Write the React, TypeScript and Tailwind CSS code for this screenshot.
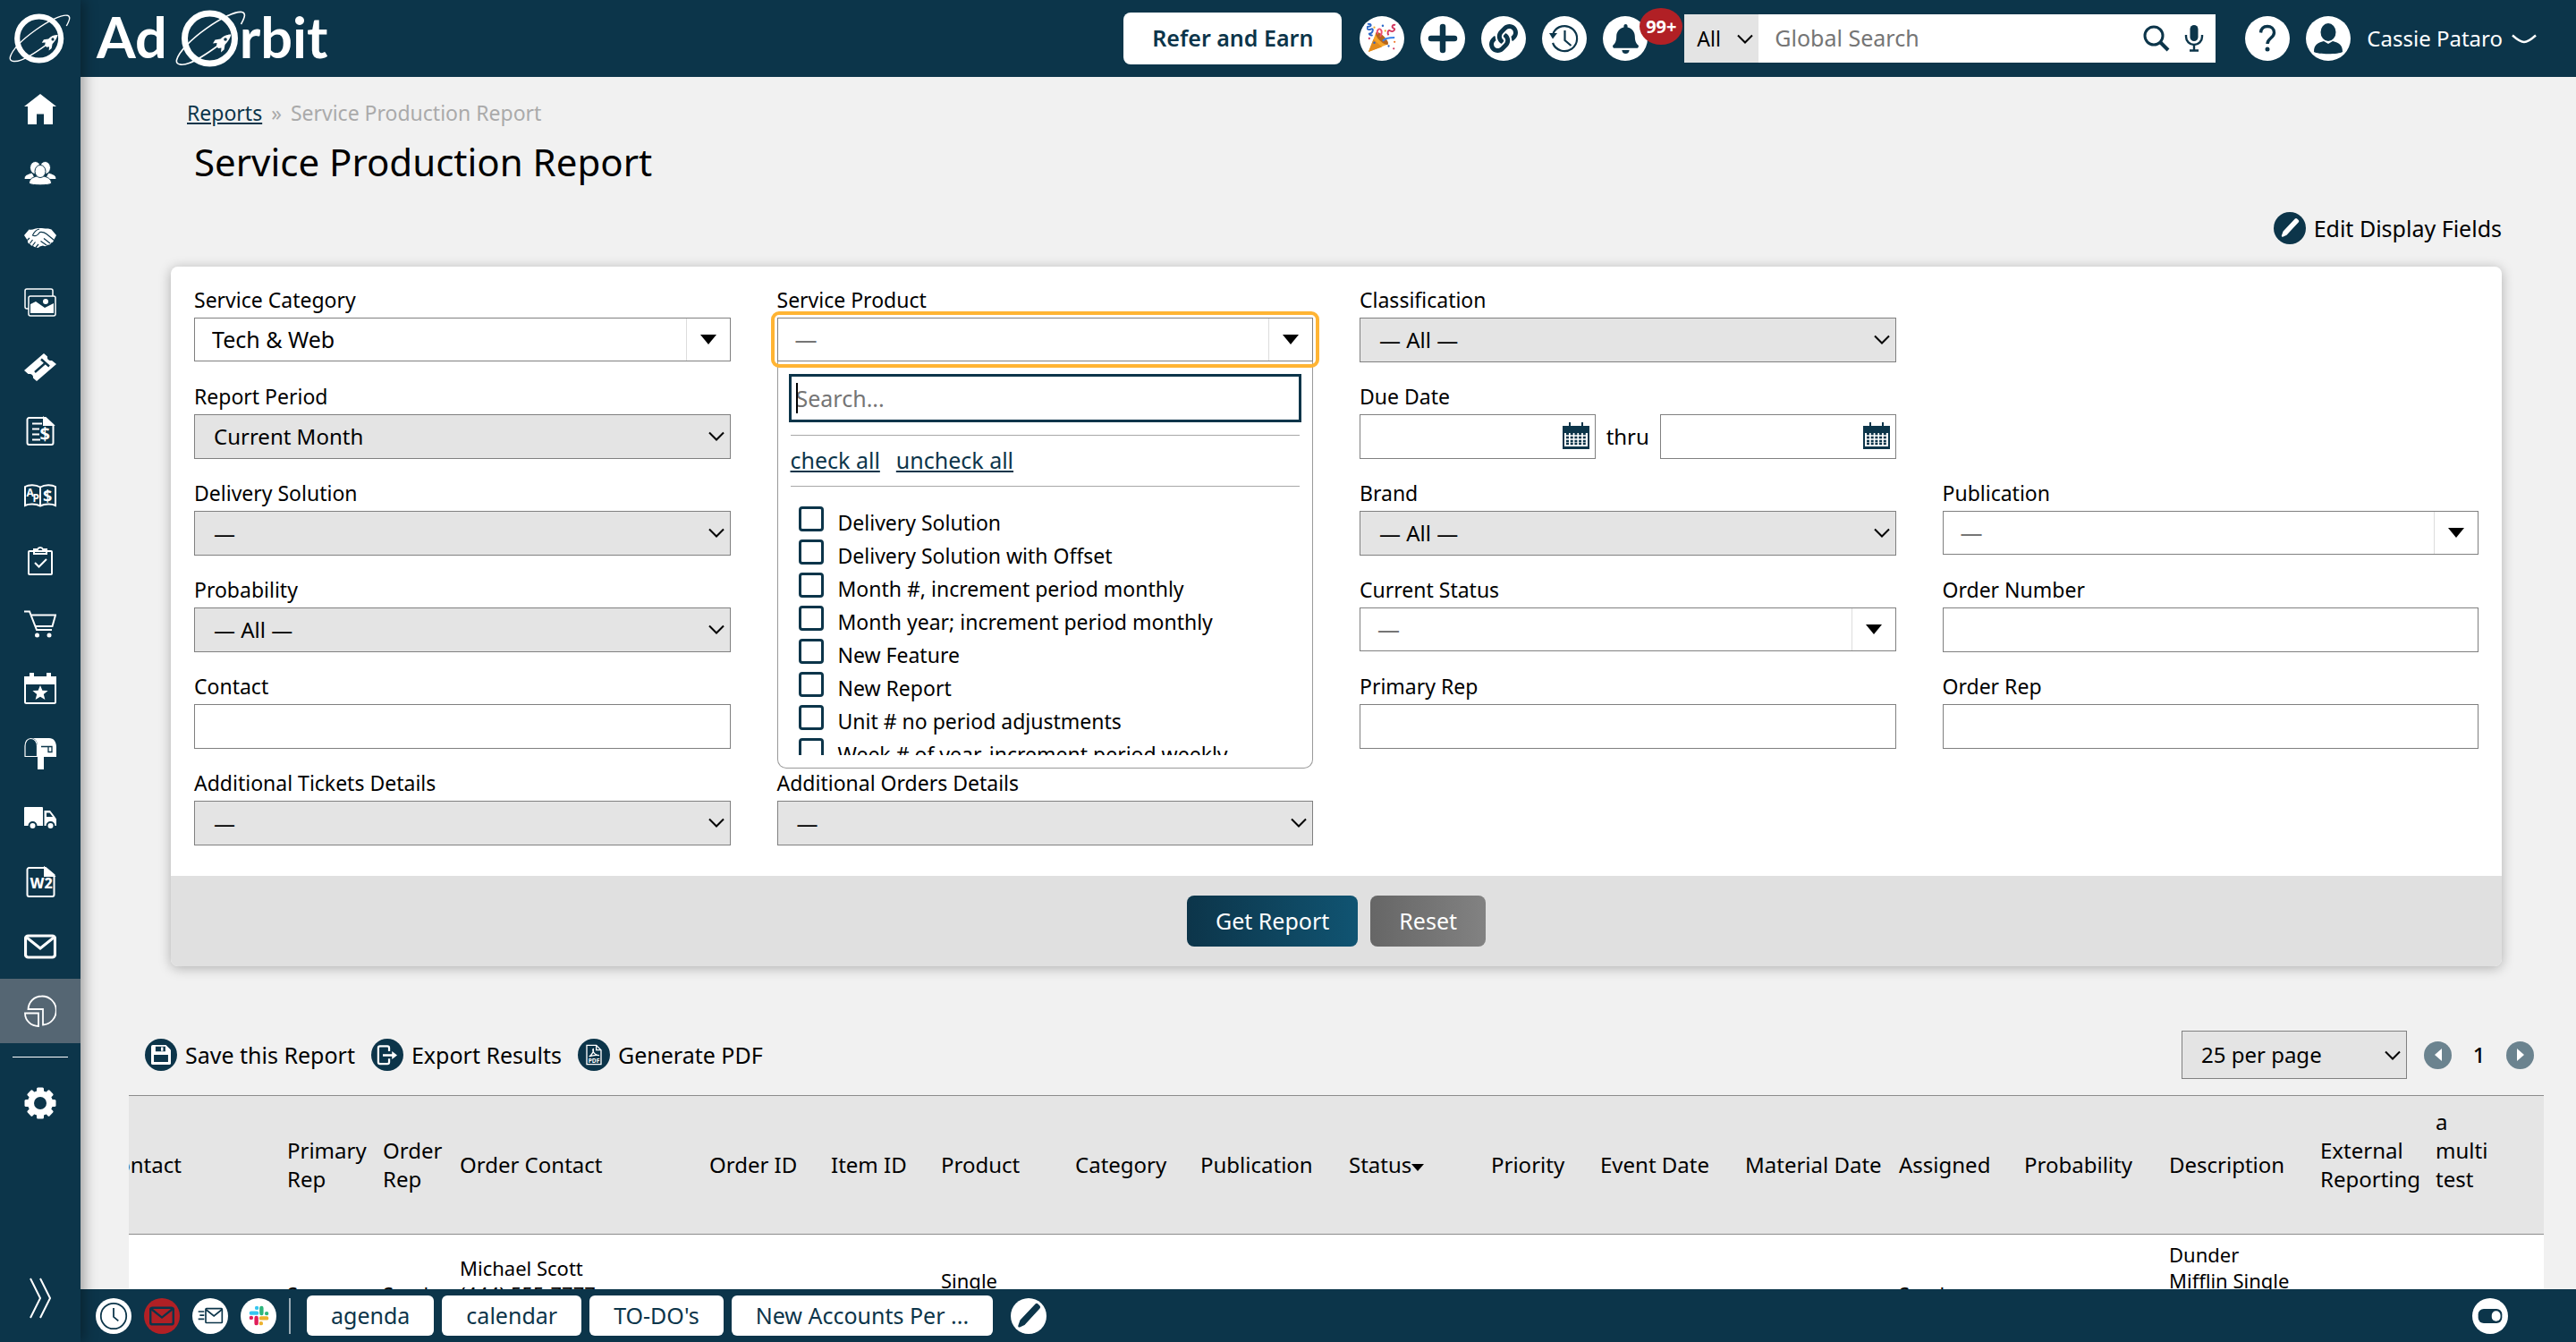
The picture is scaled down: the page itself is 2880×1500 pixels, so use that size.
import React from 'react';
import { FaBell, FaLink } from 'react-icons/fa';

const columns = [
    { label: 'Contact', width: 205 },
    { label: 'Primary Rep', width: 107 },
    { label: 'Order Rep', width: 86 },
    { label: 'Order Contact', width: 279 },
    { label: 'Order ID', width: 136 },
    { label: 'Item ID', width: 123 },
    { label: 'Product', width: 150 },
    { label: 'Category', width: 140 },
    { label: 'Publication', width: 166 },
    { label: 'Status', width: 159, sorted: true },
    { label: 'Priority', width: 122 },
    { label: 'Event Date', width: 162 },
    { label: 'Material Date', width: 172 },
    { label: 'Assigned', width: 140 },
    { label: 'Probability', width: 162 },
    { label: 'Description', width: 169 },
    { label: 'External Reporting', width: 129 },
    { label: 'a multi test', width: 131 },
];

const rows: Record<string, string[]>[] = [
    {
        'Primary Rep': ['Sam', 'Jones'],
        'Order Rep': ['Sarah', 'Jones'],
        'Order Contact': ['Michael Scott', '(444) 555-7777', 'Dunder Mifflin', 'Scranton'],
        Product: ['Single', 'Blog', 'Post'],
        Assigned: ['Sarah', 'Jones'],
        Description: ['Dunder', 'Mifflin Single', 'Blog', 'Post', 'Monthly'],
    },
];

const products = [
    'Delivery Solution',
    'Delivery Solution with Offset',
    'Month #, increment period monthly',
    'Month year; increment period monthly',
    'New Feature',
    'New Report',
    'Unit # no period adjustments',
    'Week # of year, increment period weekly',
];

/* ---------- icons ---------- */

const Svg = ({ children, className = 'size-9', box = '0 0 36 36' }: { children: React.ReactNode; className?: string; box?: string }) => (
    <svg viewBox={box} className={className} fill="none" stroke="currentColor" strokeWidth={2} aria-hidden="true">
        {children}
    </svg>
);

const Chevron = ({ className = 'w-[18px] h-[11px]' }: { className?: string }) => (
    <Svg box="0 0 18 11" className={className}>
        <path d="M1 1.5 9 9.5 17 1.5" />
    </Svg>
);

const PencilIcon = ({ className }: { className?: string }) => (
    <Svg className={className}>
        <path d="M8 30.5c-1.300.3-2-.5-1.700-1.800L8.500 22.500 25.500 4.500a2.200 2.200 0 0 1 3 0l2 2a2.200 2.200 0 0 1 0 3L13.500 28z" fill="currentColor" stroke="none" />
    </Svg>
);

const EnvelopeIcon = ({ className }: { className?: string }) => (
    <Svg className={className}>
        <rect x="1.500" y="6" width="33" height="24" rx="3" strokeWidth="3.200" />
        <path d="M3 8l15 12L33 8" strokeWidth="3" />
    </Svg>
);

const OrbitMark = ({ className }: { className?: string }) => (
    <Svg box="0 0 80 64" className={className}>
        <circle cx="38.500" cy="32" r="28" strokeWidth="7" />
        <path d="M73.500 16C78 8 79 3.500 74.500 2.500 60 0 7 36 1.500 56c-1.500 7 9 5.500 14 3.500 10-3.500 22-12 33-20" strokeWidth="1.600" />
        <path d="M62.500 27.500c-5 0-9 1.500-12 5l-6 1-2.500 4 4.500-.5-.5 3.500 2 2.500 3.500-.5-.5 5 3.500-3 1-5.500c3-3 5.500-6.500 7-11.500z" fill="currentColor" stroke="none" />
        <circle cx="56" cy="33" r="1.800" fill="#0c354a" stroke="none" />
    </Svg>
);

const UsersIcon = () => (
    <Svg>
        <g fill="currentColor" stroke="#0c354a" strokeWidth="1">
            <path d="M0 24.500c0-5 4-6 9-7.500l4 7.500zM36 24.500c0-5-4-6-9-7.500l-4 7.500z" />
            <ellipse cx="12.500" cy="11.500" rx="6" ry="7" />
            <ellipse cx="23.500" cy="11.500" rx="6" ry="7" />
            <path d="M5.500 29c0-5.500 5-7 8.500-8h8c3.500 1 8.500 2.500 8.500 8-3 2.500-22 2.500-25 0z" />
            <ellipse cx="18" cy="15.500" rx="6" ry="7" />
        </g>
    </Svg>
);

const HandshakeIcon = () => (
    <Svg>
        <path d="M0 15 5.500 8.500c4 1 7-1.500 11-1.500 3.500-.5 7 1 10.500.5l3.500 1L36 15l-3 5.500c0 2-2 3-3 3-.5 2-2.500 2.500-4 2-1 2-3 2-5 1l-3.500 1c-1 1.500-3 2-4 .5-1.500.500-3 0-3.500-1.500-2 .5-3-.500-3.500-2-2 0-3-2-2.500-3.500z" fill="currentColor" stroke="none" />
        <g stroke="#0c354a" strokeWidth="1.200">
            <path d="M17 8c-4 1-6 3.500-7.500 7 3.500 2 6-.5 8-3.500 3-.5 5.500.5 7.500 2l8.500 7" />
            <path d="M22 18.500l7 5.500M18.500 21.500l6.500 4.500M3.500 20.500l2.500-2.500M6.500 24l3-4M9.500 26.500l3-4M13 28.500l3-3.500" />
        </g>
    </Svg>
);

const GalleryIcon = () => (
    <Svg>
        <rect x="1" y="3" width="31" height="22" rx="2" strokeWidth="1.500" />
        <rect x="5" y="11" width="30" height="22" rx="2" fill="#0c354a" strokeWidth="1.500" />
        <path d="M7 30V20l6-3 10 7 10-5v11z" fill="currentColor" stroke="none" />
        <circle cx="24" cy="17" r="3" fill="currentColor" stroke="none" />
    </Svg>
);

const TicketIcon = () => (
    <Svg>
        <path d="M0 22 22 3l4 3.500c-.5 3 1.500 5 5 4.500l5 4L14 34l-4-3.500c.5-3-1.500-5-5.500-4.500z" fill="currentColor" stroke="none" />
        <path d="M12 24l12-10.500M19 9.500l9 8" stroke="#0c354a" strokeWidth="2.400" />
    </Svg>
);

const InvoiceIcon = () => (
    <Svg>
        <path d="M24 3H5.500A2 2 0 0 0 3.500 5v26a2 2 0 0 0 2 2h25a2 2 0 0 0 2-2V11z" />
        <path d="M22 3v8h10z" fill="currentColor" />
        <path d="M9 9.500h11M9 15.500h8M9 21.500h8M9 27.500h9" />
        <text x="17.500" y="28" fill="currentColor" stroke="none" className="text-[20px] font-bold">$</text>
    </Svg>
);

const LedgerIcon = () => (
    <Svg>
        <path d="M18 8.500C13 5.500 5 5.500 1 8v21c4-2 12-2 17 .500 5-2.500 13-2.500 17-.500V8c-4-2.500-12-2.500-17 .500zM18 8v21" />
        <text x="2.500" y="19" fill="currentColor" stroke="none" className="text-[12px] font-bold">A</text>
        <text x="9.500" y="25" fill="currentColor" stroke="none" className="text-[12px] font-bold">P</text>
        <text x="21" y="24.500" fill="currentColor" stroke="none" className="text-[18px] font-bold">$</text>
    </Svg>
);

const ClipboardIcon = () => (
    <Svg>
        <rect x="5" y="8" width="26" height="26" rx="1" />
        <path d="M11 11V6h4a3.200 3.200 0 0 1 6 0h4v5z" />
        <path d="M12 21l4.500 4.500L25 17" />
    </Svg>
);

const CartIcon = () => (
    <Svg>
        <path d="M0 3.500h6l8 20.500h17M8 7.500h27L31.500 20H13" />
        <circle cx="14.500" cy="30" r="2.500" fill="currentColor" stroke="none" />
        <circle cx="28" cy="30" r="2.500" fill="currentColor" stroke="none" />
    </Svg>
);

const EventIcon = () => (
    <Svg>
        <rect x="1" y="5" width="34" height="29" rx="1.500" />
        <path d="M1 5h34v7H1zM7 1h3v5H7zM26 1h3v5h-3z" fill="currentColor" />
        <path d="M18 14l2.400 5.700 6.200.4-4.800 3.900 1.600 6-5.400-3.300-5.400 3.300 1.600-6-4.800-3.900 6.200-.4z" fill="currentColor" stroke="none" />
    </Svg>
);

const MailboxIcon = () => (
    <Svg>
        <path d="M8 1h20c5 0 8 4 8 10v11H22v14h-7V22h0V10C15 4 12 1 8 1z" fill="currentColor" stroke="none" />
        <path d="M1 21.500V10C1 5 3.500 1.500 7.500 1.500S14.500 5 14.500 10v11.500z" fill="#0c354a" strokeWidth="1.200" />
        <path d="M19 10.500h12v6h-4v-6" stroke="#0c354a" strokeWidth="1.300" />
    </Svg>
);

const TruckIcon = () => (
    <Svg>
        <path d="M1 6h19a1 1 0 0 1 1 1v20H0V7a1 1 0 0 1 1-1zM22.500 10H29l5 6.500 2 3V27H22.500z" fill="currentColor" stroke="none" />
        <path d="M25 12.500h3.500l3.500 4.500h-7z" fill="#0c354a" stroke="none" />
        <circle cx="9.500" cy="27" r="4" fill="currentColor" stroke="#0c354a" />
        <circle cx="29.500" cy="27" r="4" fill="currentColor" stroke="#0c354a" />
    </Svg>
);

const W2Icon = () => (
    <Svg>
        <path d="M24 2H5.500a2 2 0 0 0-2 2v28a2 2 0 0 0 2 2h26a2 2 0 0 0 2-2V10z" />
        <path d="M23 2v9h10z" fill="currentColor" />
        <text x="6.500" y="25" fill="currentColor" stroke="none" className="text-[16px] font-extrabold">W2</text>
    </Svg>
);

const ReportIcon = () => (
    <Svg>
        <path d="M4.500 16C5 8 11 1.500 19.500 1.500A15.500 16 0 0 1 21 33.500V16z" strokeWidth="1.800" />
        <path d="M1 20.500h15V35C8 35 1 29 1 20.500z" strokeWidth="1.800" />
    </Svg>
);

const GearIcon = () => (
    <Svg>
        {[0, 45, 90, 135].map((angle) => (
            <rect key={angle} x="14" y="0.500" width="8" height="35" rx="1.500" fill="currentColor" stroke="none" transform={`rotate(${angle} 18 18)`} />
        ))}
        <circle cx="18" cy="18" r="10.500" strokeWidth="7" />
        <circle cx="18" cy="18" r="7" fill="#0c354a" stroke="none" />
    </Svg>
);

const PartyIcon = () => (
    <Svg className="size-[34px]">
        <path d="M11 11 2 34l23-9z" fill="#f5a52a" stroke="none" />
        <path d="M8 19 2 34l16-6z" fill="#e38b1d" stroke="none" />
        <ellipse cx="18" cy="18" rx="3.500" ry="10" transform="rotate(-45 18 18)" fill="#b5651d" stroke="none" />
        <path d="M1 1c5-1 5 3 1 3s-1 5 3 3 2 5-1 5 1 3 3 2" stroke="#2a66c8" />
        <path d="M34 2c-4-1-5 3-2 4s-1 5-4 3-4 3-2 5" stroke="#d2375f" />
        <path d="M13 13c-2-5 2-8 4-5s0 5-1 8" stroke="#ef4f6e" />
        <path d="M19 21c3-4 9-4 14-4" stroke="#3a82e8" />
        <g stroke="none">
            <circle cx="19" cy="3" r="1.300" fill="#2a66c8" />
            <circle cx="9" cy="5" r="1.200" fill="#f0b02c" />
            <circle cx="22" cy="9" r="1.200" fill="#f0b02c" />
            <circle cx="3" cy="18" r="1.200" fill="#d2375f" />
            <circle cx="26" cy="27" r="1.200" fill="#2a66c8" />
            <circle cx="33" cy="22" r="1.200" fill="#f07a2c" />
            <circle cx="32" cy="30" r="1.200" fill="#d2375f" />
            <circle cx="9" cy="23" r="1.300" fill="#2a66c8" />
        </g>
    </Svg>
);

const HistoryIcon = () => (
    <Svg className="size-9">
        <path d="M5.500 12A14 14 0 1 1 5 23" strokeWidth="2.200" />
        <path d="M1 12h9l-5 6.500z" fill="currentColor" stroke="none" />
        <path d="M18.500 9v11l7 6" strokeWidth="2.200" />
    </Svg>
);

const CalendarIcon = () => (
    <Svg box="0 0 30 30" className="size-[30px]">
        <path d="M1 5h28v6H1z" fill="currentColor" />
        <path d="M1 5h28v24H1zM8 0v5M22 0v5M1 28h28" />
        {[13, 17, 21, 24].map((y) => (
            <path key={y} d={`M4 ${y}h22`} strokeDasharray="3 1.700" strokeWidth="2.600" />
        ))}
    </Svg>
);

const navItems = [
    { label: 'Home', icon: <Svg><path d="M18 1 0 15h4v20h10V23.500h8V35h10V15h4z" fill="currentColor" stroke="none" /></Svg> },
    { label: 'Contacts', icon: <UsersIcon /> },
    { label: 'Deals', icon: <HandshakeIcon /> },
    { label: 'Media', icon: <GalleryIcon /> },
    { label: 'Tickets', icon: <TicketIcon /> },
    { label: 'Invoices', icon: <InvoiceIcon /> },
    { label: 'Payables', icon: <LedgerIcon /> },
    { label: 'Tasks', icon: <ClipboardIcon /> },
    { label: 'Orders', icon: <CartIcon /> },
    { label: 'Events', icon: <EventIcon /> },
    { label: 'Mailbox', icon: <MailboxIcon /> },
    { label: 'Delivery', icon: <TruckIcon /> },
    { label: 'Documents', icon: <W2Icon /> },
    { label: 'Email', icon: <EnvelopeIcon className="size-9" /> },
    { label: 'Reports', icon: <ReportIcon />, active: true },
];

/* ---------- form pieces ---------- */

interface FieldProps {
    id: string;
    label: string;
    className?: string;
    children: React.ReactNode;
}

const Field = ({ id, label, className = '', children }: FieldProps) => (
    <div className={`min-w-0 ${className}`}>
        <label htmlFor={id} className="block mb-1 text-[23px] leading-8">{label}</label>
        {children}
    </div>
);

const SelectField = ({ id, label, value, className }: { id: string; label: string; value: string; className?: string }) => (
    <Field id={id} label={label} className={className}>
        <div className="relative">
            <select id={id} className="block w-full h-[50px] px-[21px] appearance-none bg-[#e4e4e4] border border-[#808080] text-2xl">
                <option>{value}</option>
            </select>
            <Chevron className="absolute right-[7px] top-[19px] w-[18px] h-[11px] pointer-events-none" />
        </div>
    </Field>
);

const TextField = ({ id, label, className }: { id: string; label: string; className?: string }) => (
    <Field id={id} label={label} className={className}>
        <input id={id} type="text" className="block w-full h-[50px] px-5 bg-white border border-[#808080] text-2xl" />
    </Field>
);

interface ComboProps {
    id: string;
    label: string;
    value?: string;
    className?: string;
    children?: React.ReactNode;
}

const ComboField = ({ id, label, value, className, children }: ComboProps) => (
    <Field id={id} label={label} className={className}>
        <div className="relative">
            <div className="flex h-[49px] bg-white border border-[#808080]">
                <input id={id} type="text" defaultValue={value} placeholder="—" className="flex-1 min-w-0 px-[19px] text-[25px] outline-none placeholder:text-[#757575]" />
                <button type="button" aria-label={`Open ${label}`} className="w-[49px] flex items-center justify-center border-l border-[#ddd]">
                    <svg viewBox="0 0 18 11" className="w-[18px] h-[11px]" fill="currentColor"><path d="M0 0h18L9 11z" /></svg>
                </button>
            </div>
            {children}
        </div>
    </Field>
);

const DateInput = ({ id, label }: { id: string; label: string }) => (
    <div className="relative flex-1 min-w-0">
        <input id={id} type="text" aria-label={label} className="block w-full h-[50px] pl-5 pr-11 bg-white border border-[#808080] text-2xl" />
        <button type="button" aria-label={`Pick ${label}`} className="absolute right-[7px] top-[9px] text-[#0c354a]">
            <CalendarIcon />
        </button>
    </div>
);

const ProductMenu = () => (
    <>
        <div className="absolute z-10 left-0 right-0 top-[49px] px-3 pt-[14px] pb-[14px] bg-white border border-t-0 border-[#999] rounded-b-[10px]">
            <div className="relative">
                <input type="text" aria-label="Search products" placeholder="Search..." className="block w-full h-[54px] px-[5px] border-3 border-[#0c354a] text-[25px] outline-none placeholder:text-[#757575]" />
                <span className="absolute left-2 top-[10px] w-[2px] h-[34px] bg-black" />
            </div>
            <div className="mx-[2px] mt-[14px] mb-4 h-[58px] flex items-center gap-[18px] border-y border-[#a8a8a8] text-[25px] text-[#0c354a]">
                <a href="#check" className="underline">check all</a>
                <a href="#uncheck" className="underline">uncheck all</a>
            </div>
            <ul className="h-[284px] pt-[6px] pl-[11px] overflow-hidden">
                {products.map((product) => (
                    <li key={product}>
                        <label className="flex items-start gap-4 text-[23px] leading-[37px] whitespace-nowrap">
                            <input type="checkbox" className="size-7 shrink-0 appearance-none bg-white border-3 border-[#0c354a] rounded-[4px]" />
                            {product}
                        </label>
                    </li>
                ))}
            </ul>
        </div>
        <div className="absolute z-20 -inset-[7px] border-4 border-[#ffb433] rounded-[9px] pointer-events-none" />
    </>
);

/* ---------- page frame ---------- */

const Sidebar = () => (
    <aside className="relative z-30 w-[90px] shrink-0 flex flex-col bg-[#0c354a] text-white shadow-[4px_0_14px_rgba(0,0,0,0.35)]">
        <a href="#home" aria-label="Ad Orbit" className="h-[86px] flex items-center justify-center">
            <OrbitMark className="w-[70px] h-[56px]" />
        </a>
        <nav>
            {navItems.map((item) => (
                <a
                    key={item.label}
                    href={`#${item.label.toLowerCase()}`}
                    aria-label={item.label}
                    className={`h-[72px] flex items-center justify-center ${item.active ? 'bg-[#556673]' : ''}`}
                >
                    {item.icon}
                </a>
            ))}
            <hr className="mx-[14px] my-[15px] border-white" />
            <a href="#settings" aria-label="Settings" className="h-[72px] flex items-center justify-center">
                <GearIcon />
            </a>
        </nav>
        <button type="button" aria-label="Expand menu" className="mt-auto mb-[26px] self-center">
            <Svg box="0 0 24 46" className="w-6 h-[46px]">
                <path d="M1 1l11 22L1 45M12 1l11 22-11 22" />
            </Svg>
        </button>
    </aside>
);

const circle = 'size-[50px] rounded-full bg-white text-[#0c354a] flex items-center justify-center shrink-0';

const Header = () => (
    <header className="h-[86px] shrink-0 flex items-center pl-[18px] pr-11 bg-[#0c354a] text-white">
        <div className="flex items-center font-['Lato',sans-serif] font-bold text-[63px] leading-[64px]">
            <span className="pb-1">Ad</span>
            <OrbitMark className="ml-[9px] -mr-2 w-20 h-16" />
            <span className="pb-1">rbit</span>
        </div>

        <button type="button" className="ml-auto h-[58px] px-8 rounded-lg bg-white text-[#0c354a] text-[25px] font-semibold">Refer and Earn</button>
        <div className="ml-5 flex gap-[18px]">
            <button type="button" aria-label="What's new" className={circle}><PartyIcon /></button>
            <button type="button" aria-label="Add" className={circle}>
                <Svg className="size-9"><path d="M18 5v26M5 18h26" strokeWidth="6.500" strokeLinecap="round" /></Svg>
            </button>
            <button type="button" aria-label="Links" className={circle}><FaLink size={32} /></button>
            <button type="button" aria-label="History" className={circle}><HistoryIcon /></button>
            <button type="button" aria-label="Notifications" className={`relative ${circle}`}>
                <FaBell size={33} />
                <span className="absolute left-[41px] -top-[9px] w-12 h-[41px] rounded-[50%] bg-[#b12025] text-white text-[20px] leading-[41px] font-bold">99+</span>
            </button>
        </div>

        <div className="ml-[41px] flex h-[54px] w-[594px] bg-white text-black">
            <div className="relative">
                <select aria-label="Search in" className="w-[83px] h-full pl-[14px] appearance-none bg-[#e4e4e4] text-[23px]">
                    <option>All</option>
                </select>
                <Chevron className="absolute right-[6px] top-[22px] w-[18px] h-[11px] pointer-events-none" />
            </div>
            <input type="search" aria-label="Global Search" placeholder="Global Search" className="flex-1 min-w-0 pl-[18px] text-[25px] outline-none placeholder:text-[#757575]" />
            <button type="button" aria-label="Search" className="text-[#0c354a]">
                <Svg box="0 0 30 30" className="size-[30px]"><circle cx="12" cy="12" r="10" strokeWidth="3" /><path d="M19 19l9 9" strokeWidth="4" /></Svg>
            </button>
            <button type="button" aria-label="Voice search" className="ml-4 mr-[13px] text-[#0c354a]">
                <Svg box="0 0 22 30" className="w-[22px] h-[30px]">
                    <rect x="6.500" y="0" width="9" height="18" rx="4.500" fill="currentColor" stroke="none" />
                    <path d="M2 11v2a9 9 0 0 0 18 0v-2M11 22v6M6 28.500h10" strokeWidth="2.400" />
                </Svg>
            </button>
        </div>

        <button type="button" aria-label="Help" className={`ml-[33px] ${circle}`}>
            <Svg className="size-9">
                <path d="M10.500 11.500C11 7 14 4.500 18 4.500s7.500 2.500 7.500 7c0 6-7.500 6-7.500 12.500" strokeWidth="3.400" />
                <circle cx="18" cy="30" r="2.500" fill="currentColor" stroke="none" />
            </Svg>
        </button>
        <button type="button" className="ml-[18px] flex items-center text-2xl">
            <span className={circle}>
                <Svg className="size-9">
                    <ellipse cx="18" cy="11" rx="8.500" ry="10" fill="currentColor" stroke="none" />
                    <path d="M2 33c0-8 4-10 11-12l5 3 5-3c7 2 11 4 11 12-4 3-28 3-32 0z" fill="currentColor" stroke="none" />
                </Svg>
            </span>
            <span className="ml-[18px]">Cassie Pataro</span>
            <Svg box="0 0 28 11" className="ml-[10px] w-7 h-[11px]"><path d="M1 1.500C6 6 10 9 14 9s8-3 13-7.500" strokeWidth="2.400" /></Svg>
        </button>
    </header>
);

const smallCircle = 'size-10 rounded-full flex items-center justify-center shrink-0';

const Footer = () => (
    <footer className="relative h-[59px] shrink-0 flex items-center pl-[17px] pr-[76px] bg-[#0c354a] text-[#0c354a]">
        <div className="flex gap-[14px]">
            <button type="button" aria-label="Recent" className={`${smallCircle} bg-white`}>
                <Svg className="size-8"><circle cx="18" cy="18" r="16" /><path d="M18 8v11l6 5" /></Svg>
            </button>
            <button type="button" aria-label="Failed mail" className={`${smallCircle} bg-[#b12025]`}><EnvelopeIcon className="size-7" /></button>
            <button type="button" aria-label="Send mail" className={`${smallCircle} bg-white`}>
                <Svg className="size-[30px]"><rect x="12" y="8" width="22" height="19" rx="1" /><path d="M12 9l11 9 11-9M2 12h8M4 17h6M2 22h8" /></Svg>
            </button>
            <button type="button" aria-label="Slack" className={`${smallCircle} bg-white`}>
                <Svg box="0 0 24 24" className="size-[23px]">
                    <g strokeWidth="4.600" strokeLinecap="round">
                        <path d="M9.500 3v0M3 9h6.500" stroke="#36c5f0" />
                        <path d="M15 3v6.500M21 9.500v0" stroke="#2eb67d" />
                        <path d="M14.500 21v0M14.500 15H21" stroke="#ecb22e" />
                        <path d="M9 14.500V21M3 14.500v0" stroke="#e01e5a" />
                    </g>
                </Svg>
            </button>
        </div>
        <div className="ml-[14px] w-[2px] h-10 bg-[#9aabb5]" />
        <div className="ml-[18px] flex gap-[9px]">
            {['agenda', 'calendar', "TO-DO's", 'New Accounts Per ...'].map((tab) => (
                <button key={tab} type="button" className="h-[45px] px-[27px] rounded-md bg-white text-[25px] leading-[45px]">{tab}</button>
            ))}
        </div>
        <button type="button" aria-label="Edit tabs" className={`ml-5 ${smallCircle} bg-white`}><PencilIcon className="size-9" /></button>
        <button type="button" aria-label="Toggle bar" className={`ml-auto ${smallCircle} bg-white`}>
            <Svg className="size-8"><rect x="3" y="9" width="30" height="18" rx="7" fill="currentColor" stroke="none" /><rect x="20" y="11.500" width="11" height="13" rx="5.500" fill="#fff" stroke="none" /></Svg>
        </button>
    </footer>
);

const ActionButton = ({ label, children }: { label: string; children: React.ReactNode }) => (
    <button type="button" className="flex items-center gap-[9px] text-[25px] leading-9">
        <span className="size-9 rounded-full bg-[#0c354a] text-white flex items-center justify-center">{children}</span>
        {label}
    </button>
);

const PagerButton = ({ label, path }: { label: string; path: string }) => (
    <button type="button" aria-label={label} className="size-[31px] rounded-full bg-[#6b838f] text-white flex items-center justify-center">
        <svg viewBox="0 0 8 14" className="w-2 h-[14px]" fill="currentColor"><path d={path} /></svg>
    </button>
);

const ResultsTable = () => (
    <div className="ml-[54px] mr-9 mt-[18px] overflow-hidden bg-white">
        {/* scrolled sideways, so the first heading is partly out of view */}
        <table className="-ml-[38px] w-[calc(100%+38px)] table-fixed border-collapse text-left">
            <colgroup>
                {columns.map((col) => <col key={col.label} style={{ width: col.width }} />)}
            </colgroup>
            <thead>
                <tr className="bg-[#e5e5e5] border-y border-[#8c8c8c] text-2xl leading-8">
                    {columns.map((col) => (
                        <th key={col.label} scope="col" className={`pl-[10px] pt-[13px] font-normal ${col.label === 'a multi test' ? 'pb-[45px] pr-14' : 'pb-[13px]'}`}>
                            {col.label}
                            {col.sorted && (
                                <svg viewBox="0 0 14 8" className="inline-block w-[14px] h-2" fill="currentColor"><path d="M0 0h14L7 8z" /></svg>
                            )}
                        </th>
                    ))}
                </tr>
            </thead>
            <tbody>
                {rows.map((row, i) => (
                    <tr key={i} className="text-[22px] leading-[29px]">
                        {columns.map((col) => (
                            <td key={col.label} className="pl-[10px] py-2 whitespace-nowrap">
                                {row[col.label]?.map((line) => <div key={line}>{line}</div>)}
                            </td>
                        ))}
                    </tr>
                ))}
            </tbody>
        </table>
    </div>
);

export default function App() {
    return (
        <div className="h-screen flex overflow-hidden bg-[#f1f1f1] text-black font-['Noto_Sans',sans-serif]">
            <Sidebar />
            <div className="flex-1 min-w-0 flex flex-col">
                <Header />
                <main className="flex-1 min-h-0 overflow-hidden">
                    <div className="pl-[101px] pr-[83px] pt-6">
                        <nav aria-label="Breadcrumb" className="ml-[18px] flex gap-[10px] text-[23px] leading-8 text-[#aaa]">
                            <a href="#reports" className="text-[#0c354a] underline">Reports</a>
                            <span>»</span>
                            <span>Service Production Report</span>
                        </nav>
                        <h1 className="ml-[26px] mt-[11px] text-[42px] leading-[56px]">Service Production Report</h1>
                        <div className="mt-7 flex justify-end">
                            <ActionButton label="Edit Display Fields"><PencilIcon className="size-7" /></ActionButton>
                        </div>

                        <form className="mt-[25px] bg-white rounded-lg shadow-[0_2px_14px_rgba(0,0,0,0.28)]" onSubmit={(e) => e.preventDefault()}>
                            <div className="grid grid-cols-4 gap-x-[52px] gap-y-[22px] px-[26px] pt-[21px] pb-[34px]">
                                <ComboField id="service-category" label="Service Category" value="Tech & Web" />
                                <ComboField id="service-product" label="Service Product"><ProductMenu /></ComboField>
                                <SelectField id="classification" label="Classification" value="— All —" />

                                <SelectField id="report-period" label="Report Period" value="Current Month" className="col-start-1" />
                                <Field id="due-from" label="Due Date" className="col-start-3">
                                    <div className="flex items-center gap-3 text-2xl">
                                        <DateInput id="due-from" label="due date from" />
                                        <span>thru</span>
                                        <DateInput id="due-to" label="due date to" />
                                    </div>
                                </Field>

                                <SelectField id="delivery-solution" label="Delivery Solution" value="—" className="col-start-1" />
                                <SelectField id="brand" label="Brand" value="— All —" className="col-start-3" />
                                <ComboField id="publication" label="Publication" />

                                <SelectField id="probability" label="Probability" value="— All —" className="col-start-1" />
                                <ComboField id="current-status" label="Current Status" className="col-start-3" />
                                <TextField id="order-number" label="Order Number" />

                                <TextField id="contact" label="Contact" className="col-start-1" />
                                <TextField id="primary-rep" label="Primary Rep" className="col-start-3" />
                                <TextField id="order-rep" label="Order Rep" />

                                <SelectField id="ticket-details" label="Additional Tickets Details" value="—" className="col-start-1" />
                                <SelectField id="order-details" label="Additional Orders Details" value="—" />
                            </div>
                            <div className="flex justify-center gap-[14px] py-[22px] bg-[#e0e0e0] rounded-b-lg text-[25px] text-white">
                                <button type="submit" className="h-[57px] px-8 rounded-lg bg-linear-to-r from-[#0c354a] to-[#105472]">Get Report</button>
                                <button type="reset" className="h-[57px] px-8 rounded-lg bg-linear-to-r from-[#666] to-[#828282]">Reset</button>
                            </div>
                        </form>
                    </div>

                    <div className="mt-[72px] pl-[72px] pr-[47px] flex items-center">
                        <div className="flex gap-[18px]">
                            <ActionButton label="Save this Report">
                                <Svg className="size-[22px]">
                                    <path d="M3 0h24l9 9v24a3 3 0 0 1-3 3H3a3 3 0 0 1-3-3V3a3 3 0 0 1 3-3z" fill="currentColor" stroke="none" />
                                    <path d="M8 3h18v9H8zM5 18h26v13H5z" fill="#0c354a" stroke="none" />
                                    <path d="M20 4v7" strokeWidth="4" />
                                </Svg>
                            </ActionButton>
                            <ActionButton label="Export Results">
                                <Svg className="size-[23px]">
                                    <path d="M22 11V5a3 3 0 0 0-3-3H6a3 3 0 0 0-3 3v25a3 3 0 0 0 3 3h13a3 3 0 0 0 3-3v-6" strokeWidth="3.500" />
                                    <path d="M11 18h18" strokeWidth="4" />
                                    <path d="M27 11l9 7-9 7z" fill="currentColor" stroke="none" />
                                </Svg>
                            </ActionButton>
                            <ActionButton label="Generate PDF">
                                <Svg className="size-6">
                                    <path d="M22 2H6v32h24V10z" />
                                    <path d="M22 2v8h8" />
                                    <path d="M10 21c5-3 8-9 7-13-2 0-1 10 10 11-6-1-12 0-17 2z" />
                                    <text x="8.500" y="32" fill="currentColor" stroke="none" className="text-[10px] font-bold">PDF</text>
                                </Svg>
                            </ActionButton>
                        </div>
                        <div className="relative ml-auto">
                            <select aria-label="Rows per page" className="block w-[252px] h-[54px] px-[21px] appearance-none bg-[#e4e4e4] border border-[#808080] text-2xl">
                                <option>25 per page</option>
                            </select>
                            <Chevron className="absolute right-[7px] top-[22px] w-[18px] h-[11px] pointer-events-none" />
                        </div>
                        <div className="ml-[19px] flex items-center text-2xl font-medium">
                            <PagerButton label="Previous page" path="M8 0v14L0 7z" />
                            <span className="w-[61px] text-center">1</span>
                            <PagerButton label="Next page" path="M0 0v14l8-7z" />
                        </div>
                    </div>

                    <ResultsTable />
                </main>
                <Footer />
            </div>
        </div>
    );
}
